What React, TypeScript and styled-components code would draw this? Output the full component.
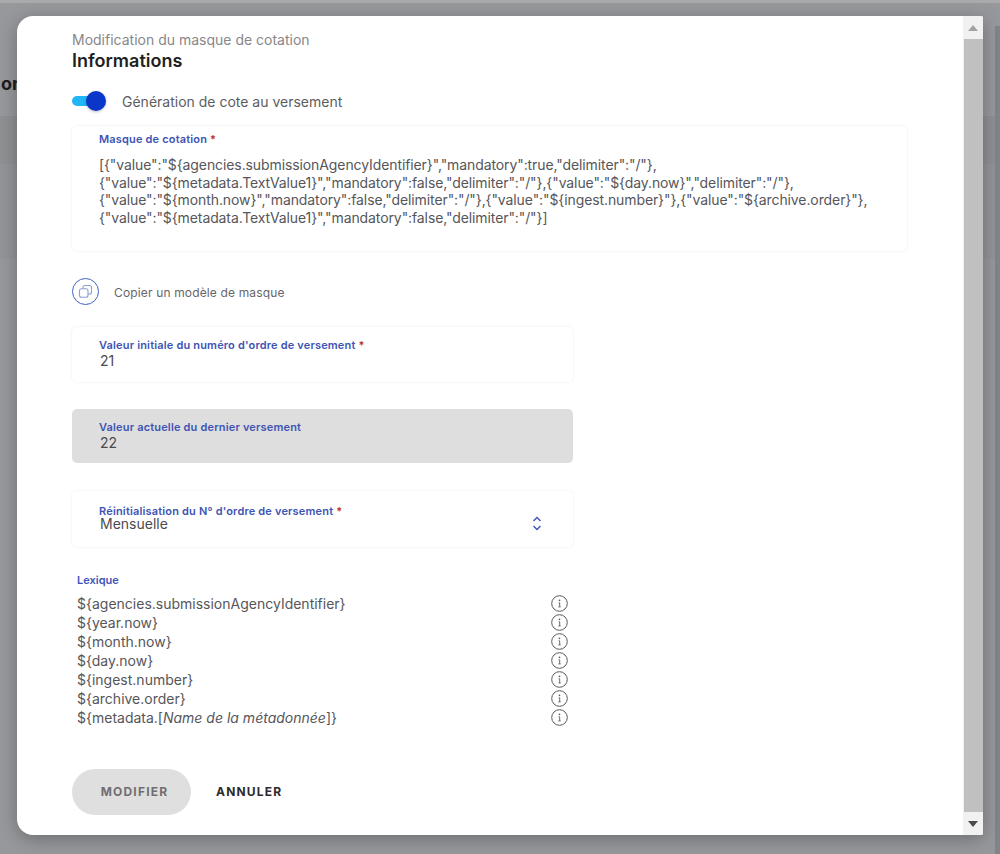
import React from 'react';
import styled, { createGlobalStyle } from 'styled-components';

const GlobalStyle = createGlobalStyle`
  html, body {
    margin: 0;
    padding: 0;
    height: 100%;
    overflow: hidden;
    font-family: 'Inter', 'Open Sans', sans-serif;
  }
`;

const Page = styled.div`
  width: 1000px;
  height: 854px;
  position: relative;
  overflow: hidden;
  background-color: #97989b;
`;

const TopStrip = styled.div`
  height: 3px;
  background-color: #aaaaac;
`;

const BehindRow = styled.div<{ $height: number; $shade: string }>`
  height: ${(p) => p.$height}px;
  background-color: ${(p) => p.$shade};
`;

const BehindText = styled.div`
  position: absolute;
  left: 1px;
  top: 73px;
  font-size: 18px;
  font-weight: 700;
  color: #1c1c20;
`;

const BehindScrollbar = styled.div`
  position: absolute;
  right: 0;
  top: 26px;
  bottom: 0;
  width: 5px;
  background-color: #838488;
`;

const Overlay = styled.div`
  position: absolute;
  inset: 0;
  padding: 16px 17px 19px 17px;
  box-sizing: border-box;
  display: flex;
`;

const Modal = styled.div`
  flex: 1;
  display: flex;
  background-color: #fff;
  border-radius: 16px 2px 2px 16px;
  box-shadow: 0 4px 18px rgba(0, 0, 0, 0.28);
  overflow: hidden;
`;

const Content = styled.div`
  flex: 1;
  padding: 15px 56px 0 55px;
  min-width: 0;
`;

const Subtitle = styled.div`
  font-size: 14px;
  line-height: 17px;
  color: #87878a;
  margin-bottom: 1px;
`;

const Title = styled.div`
  font-size: 18px;
  line-height: 23px;
  font-weight: 600;
  color: #1f1f22;
  margin-bottom: 18px;
`;

const ToggleRow = styled.div`
  display: flex;
  align-items: center;
  height: 22px;
  gap: 16px;
  margin-bottom: 14px;
`;

const Toggle = styled.div`
  width: 34px;
  height: 20px;
  display: flex;
  align-items: center;
  position: relative;
`;

const ToggleTrack = styled.div`
  width: 24px;
  height: 10px;
  border-radius: 5px;
  background-color: #21b6f5;
`;

const ToggleKnob = styled.div`
  position: absolute;
  right: 0;
  top: 0;
  width: 20px;
  height: 20px;
  border-radius: 50%;
  background-color: #0a36c9;
  box-shadow: 0 1px 3px rgba(0, 0, 0, 0.25);
`;

const ToggleLabel = styled.span`
  font-size: 14px;
  color: #5d5d60;
`;

const Field = styled.div<{ $width?: number; $height: number; $top: number; $offset?: number; $disabled?: boolean }>`
  box-sizing: border-box;
  width: ${(p) => (p.$width ? `${p.$width}px` : '100%')};
  height: ${(p) => p.$height}px;
  margin-top: ${(p) => p.$offset ?? 0}px;
  padding: ${(p) => p.$top}px 27px 0;
  border-radius: 5px;
  background-color: ${(p) => (p.$disabled ? '#dedede' : '#fff')};
  box-shadow: ${(p) => (p.$disabled ? 'none' : '0 0 3px rgba(0, 0, 0, 0.08)')};
  position: relative;
`;

const FieldLabel = styled.div`
  font-size: 11px;
  line-height: 13px;
  font-weight: 600;
  color: #3e54b4;
  letter-spacing: 0.17px;
`;

const Required = styled.span`
  color: #c22b3a;
`;

const MaskText = styled.div`
  font-size: 14px;
  line-height: 17.5px;
  color: #56565a;
  margin-top: 10px;
  letter-spacing: -0.1px;
  white-space: nowrap;
`;

const CopyRow = styled.div`
  display: flex;
  align-items: center;
  gap: 15px;
  margin: 27px 0 22px;
  height: 27px;
`;

const CopyCircle = styled.div`
  width: 27px;
  height: 27px;
  box-sizing: border-box;
  border: 1.5px solid #3f62c4;
  border-radius: 50%;
  display: flex;
  align-items: center;
  justify-content: center;
`;

const CopyLabel = styled.span`
  font-size: 12px;
  color: #66666a;
  letter-spacing: 0.15px;
  padding-top: 2px;
`;

const FieldValue = styled.div<{ $tight?: boolean }>`
  font-size: 14px;
  line-height: ${(p) => (p.$tight ? 12 : 17)}px;
  color: #4b4b4f;
  padding-left: 1px;
`;

const FieldStack = styled.div`
  display: flex;
  flex-direction: column;
  gap: 27px;
`;

const SelectIcon = styled.div`
  position: absolute;
  right: 31px;
  top: 25px;
  line-height: 0;
`;

const LexiqueSection = styled.div`
  margin-top: 27px;
  width: 496px;
  padding-left: 5px;
  box-sizing: border-box;
`;

const LexiqueLabel = styled.div`
  font-size: 11px;
  line-height: 13px;
  font-weight: 600;
  color: #3e54b4;
  margin-bottom: 7px;
`;

const LexiqueRow = styled.div`
  display: flex;
  justify-content: space-between;
  align-items: center;
  height: 19px;
  font-size: 14px;
  color: #56565a;
`;

const Buttons = styled.div`
  display: flex;
  align-items: center;
  gap: 25px;
  margin-top: 42px;
`;

const PrimaryButton = styled.button`
  width: 119px;
  height: 46px;
  padding: 0 0 2px 6px;
  border: none;
  border-radius: 23px;
  background-color: #dfdfdf;
  color: #6f6f72;
  font-family: inherit;
  font-size: 12px;
  font-weight: 700;
  letter-spacing: 1.2px;
`;

const TextButton = styled.button`
  border: none;
  padding: 0 0 2px;
  background: none;
  color: #2b2b2e;
  font-family: inherit;
  font-size: 12px;
  font-weight: 700;
  letter-spacing: 1.2px;
`;

const Scrollbar = styled.div`
  width: 20px;
  display: flex;
  flex-direction: column;
  align-items: center;
  background-color: #f1f1f1;
`;

const ScrollArrow = styled.div`
  height: 23px;
  flex: none;
  display: flex;
  align-items: center;
  justify-content: center;
`;

const ScrollThumb = styled.div`
  flex: 1;
  width: 19px;
  background-color: #c0c0c0;
`;

const lexique = [
  '${agencies.submissionAgencyIdentifier}',
  '${year.now}',
  '${month.now}',
  '${day.now}',
  '${ingest.number}',
  '${archive.order}',
];

const InfoIcon = () => (
  <svg width="17" height="17" viewBox="0 0 17 17" fill="none">
    <circle cx="8.5" cy="8.5" r="7.8" stroke="#58585c" strokeWidth="1" />
    <circle cx="8.5" cy="5.4" r="0.8" fill="#58585c" />
    <path d="M7.6 7.8h1.1v4M7.4 11.9h2.3" stroke="#58585c" strokeWidth="0.9" />
  </svg>
);

function App() {
  return (
    <Page>
      <GlobalStyle />
      <TopStrip />
      <BehindRow $height={113} $shade="#97989b" />
      <BehindRow $height={48} $shade="#8f9093" />
      <BehindRow $height={95} $shade="#939497" />
      <BehindText>on</BehindText>
      <BehindScrollbar />
      <Overlay>
        <Modal>
          <Content>
            <Subtitle>Modification du masque de cotation</Subtitle>
            <Title>Informations</Title>
            <ToggleRow>
              <Toggle>
                <ToggleTrack />
                <ToggleKnob />
              </Toggle>
              <ToggleLabel>Génération de cote au versement</ToggleLabel>
            </ToggleRow>
            <Field $height={125} $top={7}>
              <FieldLabel>
                Masque de cotation <Required>*</Required>
              </FieldLabel>
              <MaskText>
                {'[{"value":"${agencies.submissionAgencyIdentifier}","mandatory":true,"delimiter":"/"},'}
                <br />
                {'{"value":"${metadata.TextValue1}","mandatory":false,"delimiter":"/"},{"value":"${day.now}","delimiter":"/"},'}
                <br />
                {'{"value":"${month.now}","mandatory":false,"delimiter":"/"},{"value":"${ingest.number}"},{"value":"${archive.order}"},'}
                <br />
                {'{"value":"${metadata.TextValue1}","mandatory":false,"delimiter":"/"}]'}
              </MaskText>
            </Field>
            <CopyRow>
              <CopyCircle>
                <svg width="15" height="15" viewBox="0 0 15 15" fill="none" stroke="#8f9fd0" strokeWidth="1.1">
                  <rect x="1.5" y="4.8" width="8.5" height="8.5" rx="2" />
                  <path d="M5 4.6V3.5a2 2 0 0 1 2-2h4.5a2 2 0 0 1 2 2V8a2 2 0 0 1-2 2h-1.4" />
                </svg>
              </CopyCircle>
              <CopyLabel>Copier un modèle de masque</CopyLabel>
            </CopyRow>
            <FieldStack>
              <Field $width={501} $height={55} $top={12}>
                <FieldLabel>
                  Valeur initiale du numéro d'ordre de versement <Required>*</Required>
                </FieldLabel>
                <FieldValue>21</FieldValue>
              </Field>
              <Field $width={501} $height={54} $top={12} $disabled>
                <FieldLabel>Valeur actuelle du dernier versement</FieldLabel>
                <FieldValue>22</FieldValue>
              </Field>
              <Field $width={501} $height={56} $top={14} $offset={1}>
                <FieldLabel>
                  Réinitialisation du N° d'ordre de versement <Required>*</Required>
                </FieldLabel>
                <FieldValue $tight>Mensuelle</FieldValue>
                <SelectIcon>
                  <svg width="10" height="15" viewBox="0 0 10 15" fill="none" stroke="#3e54b4" strokeWidth="1.4">
                    <path d="M1.5 5 5 1.5 8.5 5" />
                    <path d="M1.5 10 5 13.5 8.5 10" />
                  </svg>
                </SelectIcon>
              </Field>
            </FieldStack>
            <LexiqueSection>
              <LexiqueLabel>Lexique</LexiqueLabel>
              {lexique.map((item) => (
                <LexiqueRow key={item}>
                  <span>{item}</span>
                  <InfoIcon />
                </LexiqueRow>
              ))}
              <LexiqueRow>
                <span>
                  {'${metadata.['}
                  <em>Name de la métadonnée</em>
                  {']}'}
                </span>
                <InfoIcon />
              </LexiqueRow>
            </LexiqueSection>
            <Buttons>
              <PrimaryButton>MODIFIER</PrimaryButton>
              <TextButton>ANNULER</TextButton>
            </Buttons>
          </Content>
          <Scrollbar>
            <ScrollArrow>
              <svg width="10" height="6" viewBox="0 0 10 6">
                <path d="M0 6 5 0l5 6z" fill="#a3a3a3" />
              </svg>
            </ScrollArrow>
            <ScrollThumb />
            <ScrollArrow>
              <svg width="10" height="6" viewBox="0 0 10 6">
                <path d="M0 0l5 6 5-6z" fill="#4a4a4a" />
              </svg>
            </ScrollArrow>
          </Scrollbar>
        </Modal>
      </Overlay>
    </Page>
  );
}

export default App;
